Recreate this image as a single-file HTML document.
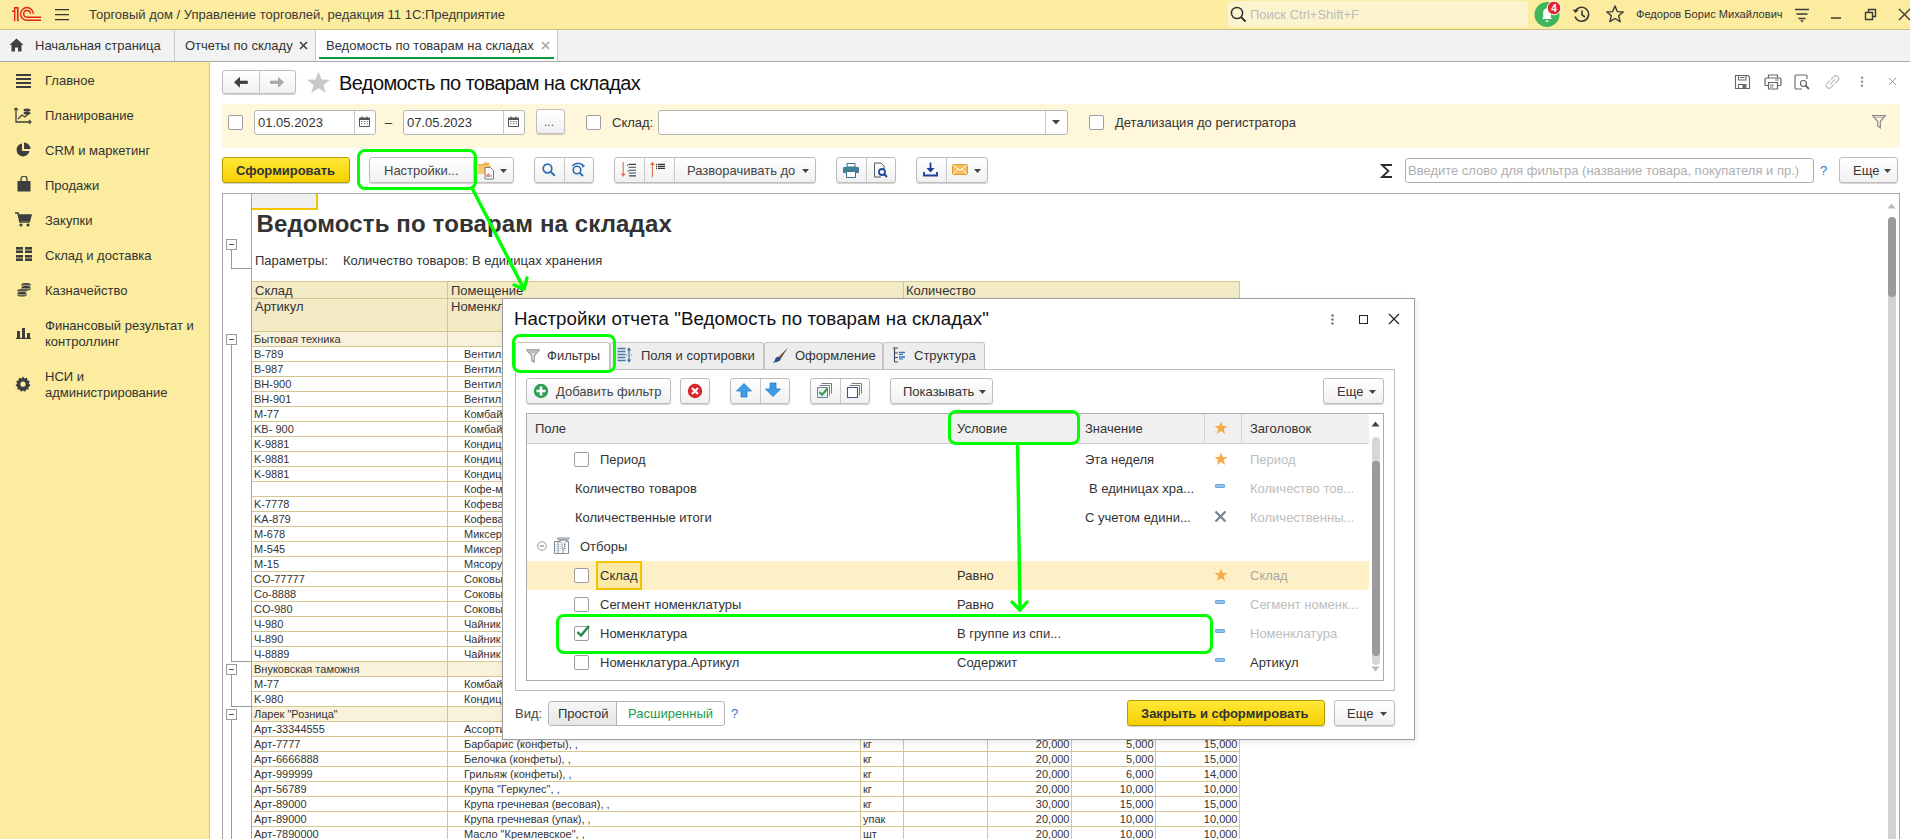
<!DOCTYPE html>
<html><head><meta charset="utf-8">
<style>
*{box-sizing:border-box;margin:0;padding:0}
html,body{width:1910px;height:839px;overflow:hidden;background:#fff;font-family:"Liberation Sans",sans-serif;font-size:13px;color:#333}
.a{position:absolute}
.t{position:absolute;white-space:nowrap;line-height:15px}
#top{left:0;top:0;width:1910px;height:30px;background:#FBEC9F;border-bottom:1px solid #CDBF80}
#tabs{left:0;top:30px;width:1910px;height:32px;background:#F2F2F2;border-bottom:1px solid #A9A9A9}
#side{left:0;top:62px;width:210px;height:777px;background:#FBEC9F;border-right:1px solid #D2C68C}
.btn{position:absolute;border:1px solid #BDBDBD;border-radius:3px;background:linear-gradient(#FFFFFF,#F0F0F0);box-shadow:0 1px 1px rgba(0,0,0,.18)}
.inp{position:absolute;border:1px solid #B5B5B5;border-radius:3px;background:#fff}
.cb{position:absolute;width:15px;height:15px;border:1px solid #9E9E9E;border-radius:2px;background:#fff}
.g{position:absolute;border:3.5px solid #00FF00;border-radius:8px}

#rep{left:222px;top:193px;width:1678px;height:660px;border:1px solid #A6A6A6;background:#fff;overflow:hidden}
.rt{position:absolute;white-space:nowrap;font-size:11px;line-height:15px;color:#333}
.hd{position:absolute;background:#F3EAC6}
.gr{position:absolute;background:#F8F1DB}
.hl{position:absolute;height:1px;background:#D5C68F}
.vl{position:absolute;width:1px;background:#D5C68F}
.mb{position:absolute;width:11px;height:11px;border:1px solid #9a9a9a;background:#fff}
.mb:after{content:"";position:absolute;left:2px;top:4px;width:5px;height:1px;background:#555}
.tl{position:absolute;background:#9a9a9a}

.dt{position:absolute;white-space:nowrap;line-height:15px;color:#333;font-size:13px}
.tab{position:absolute;top:342px;height:27px;border:1px solid #C4C4C4;border-bottom:none;border-radius:3px 3px 0 0;background:#EDEDED}
.bd{position:absolute;width:10px;height:4px;background:#8FC3EC;border:1px solid #6FA6D6;border-radius:1px}
</style></head><body>

<!-- TOP BAR -->
<div id="top" class="a">
  <svg class="a" style="left:0;top:0" width="45" height="30" viewBox="0 0 45 30">
    <path d="M14 7H18.6V21.2H16.9V8.4H15.4V21.2H14V11.9H12V10.5H14Z" fill="#E2231A"/>
    <path d="M33.3 13.9A6.35 6.35 0 1 0 26.95 20.25H41" stroke="#E2231A" stroke-width="1.4" fill="none"/>
    <path d="M30.4 13.85A3.35 3.35 0 1 0 27.05 17.2H41" stroke="#E2231A" stroke-width="1.4" fill="none"/>
  </svg>
  <svg class="a" style="left:55px;top:8px" width="15" height="14" viewBox="0 0 15 14"><path d="M0 1.5H14M0 6.5H14M0 11.5H14" stroke="#333" stroke-width="1.25"/></svg>
  <div class="t" style="left:89px;top:7px;color:#3a3a3a">Торговый дом / Управление торговлей, редакция 11 1С:Предприятие</div>
  <div class="a" style="left:1228px;top:1px;width:300px;height:26px;background:#FCF3CF;border-radius:3px"></div>
  <svg class="a" style="left:1230px;top:6px" width="17" height="17" viewBox="0 0 17 17"><circle cx="7" cy="7" r="5.6" stroke="#333" stroke-width="1.5" fill="none"/><path d="M11 11L15.5 15.5" stroke="#333" stroke-width="2"/></svg>
  <div class="t" style="left:1250px;top:7px;color:#BDBDBD">Поиск Ctrl+Shift+F</div>
  <svg class="a" style="left:1534px;top:1px" width="34" height="27" viewBox="0 0 34 27"><circle cx="13" cy="13.5" r="12.5" fill="#3FB65E"/><path d="M8 18H18L16.8 16.2V11.5Q16.8 8 13 7.2Q9.2 8 9.2 11.5V16.2Z" fill="#fff"/><path d="M11.5 19.5H14.5Q14.5 21.2 13 21.2Q11.5 21.2 11.5 19.5Z" fill="#fff"/><circle cx="20" cy="7" r="6.8" fill="#E2262B" stroke="#fff" stroke-width="1"/><text x="20" y="10.6" font-family="Liberation Sans" font-weight="bold" font-size="10" fill="#fff" text-anchor="middle">4</text></svg>
  <svg class="a" style="left:1572px;top:6px" width="19" height="17" viewBox="0 0 19 17"><path d="M3.2 5.5A7 7 0 1 1 3 10.5" stroke="#3a3a3a" stroke-width="1.6" fill="none"/><path d="M0.5 3.5L3.5 7L6.8 4Z" fill="#3a3a3a"/><path d="M10 4.5V8.8L13 11" stroke="#3a3a3a" stroke-width="1.6" fill="none"/></svg>
  <svg class="a" style="left:1606px;top:5px" width="18" height="18" viewBox="0 0 18 18"><path d="M9 1L11.3 6.6L17.2 7L12.7 10.8L14.1 16.7L9 13.5L3.9 16.7L5.3 10.8L0.8 7L6.7 6.6Z" stroke="#3a3a3a" stroke-width="1.4" fill="none" stroke-linejoin="round"/></svg>
  <div class="t" style="left:1636px;top:7px;font-size:11.1px;color:#333">Федоров Борис Михайлович</div>
  <svg class="a" style="left:1794px;top:8px" width="16" height="15" viewBox="0 0 16 15"><path d="M1 1.5H15M2.5 6H13.5M4.5 10.5H11.5" stroke="#3a3a3a" stroke-width="1.3"/><path d="M6.2 12.3H9.8L8 14.5Z" fill="#3a3a3a"/></svg>
  <svg class="a" style="left:1830px;top:16px" width="12" height="4" viewBox="0 0 12 4"><path d="M1 2H11" stroke="#3a3a3a" stroke-width="1.5"/></svg>
  <svg class="a" style="left:1864px;top:8px" width="13" height="13" viewBox="0 0 13 13"><path d="M1.5 4.5H8.5V11.5H1.5Z" stroke="#3a3a3a" stroke-width="1.4" fill="none"/><path d="M4.5 4.5V1.5H11.5V8.5H8.5" stroke="#3a3a3a" stroke-width="1.4" fill="none"/></svg>
  <svg class="a" style="left:1898px;top:8px" width="13" height="13" viewBox="0 0 13 13"><path d="M1 1L12 12M12 1L1 12" stroke="#3a3a3a" stroke-width="1.4"/></svg>
</div>

<!-- TABS -->
<div id="tabs" class="a">
  <div class="a" style="left:174px;top:0;width:1px;height:31px;background:#C8C8C8"></div>
  <div class="a" style="left:315px;top:0;width:243px;height:31px;background:#fff;border-left:1px solid #C8C8C8;border-right:1px solid #C8C8C8"></div>
  <div class="a" style="left:319px;top:27px;width:235px;height:2px;background:#119A3B"></div>
  <svg class="a" style="left:9px;top:8px" width="15" height="14" viewBox="0 0 15 14"><path d="M7.5 0.5 L0.5 7 H2.5 V13.5 H6 V9.5 H9 V13.5 H12.5 V7 H14.5 Z" fill="#404040"/></svg>
  <div class="t" style="left:35px;top:8px;color:#333">Начальная страница</div>
  <div class="t" style="left:185px;top:8px;color:#333">Отчеты по складу</div>
  <svg class="a" style="left:299px;top:11px" width="9" height="9" viewBox="0 0 9 9"><path d="M1 1L8 8M8 1L1 8" stroke="#444" stroke-width="1.6"/></svg>
  <div class="t" style="left:326px;top:8px;color:#333">Ведомость по товарам на складах</div>
  <svg class="a" style="left:541px;top:11px" width="9" height="9" viewBox="0 0 9 9"><path d="M1 1L8 8M8 1L1 8" stroke="#A5A5A5" stroke-width="1.6"/></svg>
</div>

<!-- SIDEBAR -->
<div id="side" class="a">
  <svg class="a" style="left:16px;top:12px" width="16" height="14" viewBox="0 0 16 14"><path d="M0 1H15M0 5H15M0 9H15M0 13H15" stroke="#3d3d3d" stroke-width="1.8"/></svg>
  <div class="t" style="left:45px;top:11px">Главное</div>
  <svg class="a" style="left:14px;top:45px" width="18" height="17" viewBox="0 0 18 17"><path d="M2 1V15H17" stroke="#3d3d3d" stroke-width="1.3" fill="none"/><path d="M0 3L2 1L4 3M15 13L17 15L15 17" stroke="#3d3d3d" stroke-width="1.1" fill="none"/><path d="M4 12L8 8L11 10L15 6" stroke="#3d3d3d" stroke-width="1.3" fill="none"/><ellipse cx="13" cy="3" rx="3.5" ry="1.6" fill="#3d3d3d"/><ellipse cx="13" cy="6" rx="3.5" ry="1.6" fill="#3d3d3d"/></svg>
  <div class="t" style="left:45px;top:46px">Планирование</div>
  <svg class="a" style="left:15px;top:80px" width="16" height="16" viewBox="0 0 16 16"><path d="M7 1.5A6.5 6.5 0 1 0 14.5 9H7Z" fill="#3d3d3d"/><path d="M9 0.5V7H15.5A6.5 6.5 0 0 0 9 0.5Z" fill="#3d3d3d"/></svg>
  <div class="t" style="left:45px;top:81px">CRM и маркетинг</div>
  <svg class="a" style="left:17px;top:114px" width="14" height="16" viewBox="0 0 14 16"><path d="M4 5V3A3 3 0 0 1 10 3V5" stroke="#3d3d3d" stroke-width="1.3" fill="none"/><path d="M0.5 5H13.5V15.5H0.5Z" fill="#3d3d3d"/></svg>
  <div class="t" style="left:45px;top:116px">Продажи</div>
  <svg class="a" style="left:15px;top:150px" width="17" height="15" viewBox="0 0 17 15"><path d="M0 1H3L5 10H14L16 3H4" stroke="#3d3d3d" stroke-width="1.6" fill="none"/><path d="M4 3H16L14.5 9H5Z" fill="#3d3d3d"/><circle cx="6" cy="13" r="1.6" fill="#3d3d3d"/><circle cx="13" cy="13" r="1.6" fill="#3d3d3d"/></svg>
  <div class="t" style="left:45px;top:151px">Закупки</div>
  <svg class="a" style="left:16px;top:185px" width="16" height="14" viewBox="0 0 16 14"><path d="M0 0H7V6H0ZM9 0H16V6H9ZM0 8H7V14H0ZM9 8H16V14H9Z" fill="#3d3d3d"/><path d="M0 3H16M0 11H16" stroke="#FBEC9F" stroke-width="0.8"/></svg>
  <div class="t" style="left:45px;top:186px">Склад и доставка</div>
  <svg class="a" style="left:16px;top:220px" width="16" height="15" viewBox="0 0 16 15"><ellipse cx="10" cy="3" rx="5" ry="2" fill="#3d3d3d"/><ellipse cx="10" cy="6.5" rx="5" ry="2" fill="#3d3d3d"/><ellipse cx="6" cy="9" rx="5" ry="2" fill="#3d3d3d"/><ellipse cx="6" cy="12.5" rx="5" ry="2" fill="#3d3d3d"/><path d="M1 9.3H11M1 12.8H11M5 3.3H15M5 6.8H15" stroke="#FBEC9F" stroke-width="0.7"/></svg>
  <div class="t" style="left:45px;top:221px">Казначейство</div>
  <svg class="a" style="left:16px;top:264px" width="15" height="13" viewBox="0 0 15 13"><path d="M0 12.5H15" stroke="#3d3d3d" stroke-width="1.4"/><path d="M1 5H4V12H1ZM6 2H9V12H6ZM11 7H14V12H11Z" fill="#3d3d3d"/></svg>
  <div class="t" style="left:45px;top:256px">Финансовый результат и</div>
  <div class="t" style="left:45px;top:272px">контроллинг</div>
  <svg class="a" style="left:15px;top:314px" width="16" height="16" viewBox="0 0 16 16"><path d="M8 0.5L9.5 2.5L12 1.8L12.4 4.3L14.8 5.2L13.8 7.5L15.5 9.5L13.4 10.9L13.6 13.4L11.1 13.5L10.1 15.8L8 14.4L5.9 15.8L4.9 13.5L2.4 13.4L2.6 10.9L0.5 9.5L2.2 7.5L1.2 5.2L3.6 4.3L4 1.8L6.5 2.5Z" fill="#3d3d3d"/><circle cx="8" cy="8.2" r="2.6" fill="#FBEC9F"/></svg>
  <div class="t" style="left:45px;top:307px">НСИ и</div>
  <div class="t" style="left:45px;top:323px">администрирование</div>
</div>

<!-- FORM HEADER -->
<div class="btn" style="left:222px;top:70px;width:74px;height:24px"></div>
<div class="a" style="left:259px;top:71px;width:1px;height:22px;background:#C8C8C8"></div>
<svg class="a" style="left:233px;top:76px" width="16" height="13" viewBox="0 0 16 13"><path d="M1 6.3L7 0.8V11.8Z" fill="#404040"/><path d="M6.5 4.7H14.8V7.9H6.5Z" fill="#404040"/></svg>
<svg class="a" style="left:269px;top:76px" width="16" height="13" viewBox="0 0 16 13"><path d="M15 6.3L9 0.8V11.8Z" fill="#A8A8A8"/><path d="M1 4.7H9.5V7.9H1Z" fill="#A8A8A8"/></svg>
<svg class="a" style="left:306px;top:71px" width="25" height="23" viewBox="0 0 25 23"><path d="M12.5 0.5L15.6 8.4L24 8.7L17.4 13.9L19.7 22L12.5 17.3L5.3 22L7.6 13.9L1 8.7L9.4 8.4Z" fill="#C9C9C9"/></svg>
<div class="t" style="left:339px;top:71.5px;font-size:20px;line-height:23px;letter-spacing:-0.6px;color:#111">Ведомость по товарам на складах</div>
<!-- right icons -->
<svg class="a" style="left:1734px;top:74px" width="17" height="16" viewBox="0 0 17 16"><path d="M1.5 1.5H14L15.5 3V14.5H1.5Z" stroke="#666" stroke-width="1.1" fill="none"/><path d="M4.5 1.5V6H12V1.5M6 3.5H10.5" stroke="#666" stroke-width="1.1" fill="none"/><path d="M4.5 14.5V10.5H12V14.5" stroke="#666" stroke-width="1.1" fill="none"/><path d="M8.5 11H11.5V14H8.5Z" fill="#666"/></svg>
<svg class="a" style="left:1764px;top:74px" width="18" height="16" viewBox="0 0 18 16"><path d="M4.5 4V1H13.5V4" stroke="#666" stroke-width="1.2" fill="none"/><path d="M4 11.5H2Q1 11.5 1 10.5V5Q1 4 2 4H16Q17 4 17 5V10.5Q17 11.5 16 11.5H14" stroke="#666" stroke-width="1.2" fill="none"/><path d="M4.5 8.5H13.5V15H4.5Z" stroke="#666" stroke-width="1.2" fill="none"/><path d="M6 11H10M6 13H9M11 6H15" stroke="#666" stroke-width="0.9"/></svg>
<svg class="a" style="left:1794px;top:74px" width="17" height="16" viewBox="0 0 17 16"><path d="M8 15H2Q1 15 1 14V2Q1 1 2 1H12Q13 1 13 2V5" stroke="#666" stroke-width="1.1" fill="none"/><circle cx="9.5" cy="9.5" r="3" stroke="#666" stroke-width="1.1" fill="none"/><path d="M11.7 11.7L15 15" stroke="#666" stroke-width="1.8"/></svg>
<svg class="a" style="left:1824px;top:74px" width="17" height="16" viewBox="0 0 17 16"><path d="M7 5.5L10 2.5Q12 0.8 14 2.5Q15.8 4.5 14 6.5L11 9.5M10 10.5L7 13.5Q5 15.2 3 13.5Q1.2 11.5 3 9.5L6 6.5M6 10.5L11 5.5" stroke="#BDBDBD" stroke-width="1.1" fill="none"/></svg>
<svg class="a" style="left:1859px;top:76px" width="6" height="12" viewBox="0 0 6 12"><circle cx="3" cy="1.8" r="1.3" fill="#9a9a9a"/><circle cx="3" cy="5.8" r="1.3" fill="#9a9a9a"/><circle cx="3" cy="9.8" r="1.3" fill="#9a9a9a"/></svg>
<svg class="a" style="left:1888px;top:77px" width="9" height="9" viewBox="0 0 9 9"><path d="M1 1L8 8M8 1L1 8" stroke="#999" stroke-width="1"/></svg>

<!-- FILTER PANEL -->
<div class="a" style="left:222px;top:104px;width:1678px;height:44px;background:#FEF7DB"></div>
<div class="cb" style="left:228px;top:115px"></div>
<div class="inp" style="left:254px;top:110px;width:122px;height:25px"></div>
<div class="a" style="left:354px;top:111px;width:1px;height:23px;background:#C8C8C8"></div>
<div class="t" style="left:258px;top:115px;color:#333">01.05.2023</div>
<svg class="a" style="left:359px;top:116px" width="11" height="11" viewBox="0 0 11 11"><path d="M0.5 2H10.5V10.5H0.5Z" stroke="#555" stroke-width="1" fill="#fff"/><path d="M0.5 2H10.5V4H0.5Z" fill="#555"/><path d="M3 0.5V2.5M8 0.5V2.5" stroke="#555" stroke-width="1.2"/><path d="M2 5.5H3.5M4.8 5.5H6.3M7.6 5.5H9M2 7.8H3.5M4.8 7.8H6.3M7.6 7.8H9" stroke="#777" stroke-width="1.1"/></svg>
<div class="t" style="left:385px;top:115px;color:#333">–</div>
<div class="inp" style="left:403px;top:110px;width:122px;height:25px"></div>
<div class="a" style="left:503px;top:111px;width:1px;height:23px;background:#C8C8C8"></div>
<div class="t" style="left:407px;top:115px;color:#333">07.05.2023</div>
<svg class="a" style="left:508px;top:116px" width="11" height="11" viewBox="0 0 11 11"><path d="M0.5 2H10.5V10.5H0.5Z" stroke="#555" stroke-width="1" fill="#fff"/><path d="M0.5 2H10.5V4H0.5Z" fill="#555"/><path d="M3 0.5V2.5M8 0.5V2.5" stroke="#555" stroke-width="1.2"/><path d="M2 5.5H3.5M4.8 5.5H6.3M7.6 5.5H9M2 7.8H3.5M4.8 7.8H6.3M7.6 7.8H9" stroke="#777" stroke-width="1.1"/></svg>
<div class="btn" style="left:536px;top:109px;width:29px;height:25px"></div>
<div class="t" style="left:544px;top:115px;color:#555;font-size:12px">...</div>
<div class="cb" style="left:586px;top:115px"></div>
<div class="t" style="left:612px;top:115px;color:#333">Склад:</div>
<div class="inp" style="left:658px;top:110px;width:410px;height:25px"></div>
<div class="a" style="left:1045px;top:111px;width:1px;height:23px;background:#C8C8C8"></div>
<svg class="a" style="left:1052px;top:120px" width="8" height="5" viewBox="0 0 8 5"><path d="M0 0H8L4 4.5Z" fill="#444"/></svg>
<div class="cb" style="left:1089px;top:115px"></div>
<div class="t" style="left:1115px;top:115px;color:#333">Детализация до регистратора</div>
<svg class="a" style="left:1872px;top:115px" width="14" height="14" viewBox="0 0 14 14"><path d="M0.7 0.7H13.3L8.3 6.5V12.8L5.7 11V6.5Z" stroke="#8a8a8a" stroke-width="1.2" fill="none"/><path d="M3 2.5H11" stroke="#bbb" stroke-width="1"/></svg>

<!-- TOOLBAR -->
<div class="a" style="left:222px;top:157px;width:128px;height:26px;border:1px solid #B59C00;border-radius:3px;background:linear-gradient(#FFE838,#F6D000);box-shadow:0 1px 1px rgba(0,0,0,.2)"></div>
<div class="t" style="left:236px;top:163px;font-weight:bold;color:#333">Сформировать</div>
<div class="btn" style="left:369px;top:157px;width:145px;height:26px"></div>
<div class="a" style="left:473px;top:158px;width:1px;height:24px;background:#C8C8C8"></div>
<div class="t" style="left:384px;top:163px;color:#444">Настройки...</div>
<svg class="a" style="left:477px;top:160px" width="18" height="20" viewBox="0 0 18 20"><path d="M1 4H6L7.5 2.5H12V7H1Z" fill="#E8B24C"/><path d="M1 5.5H14V14H1Z" fill="#F6C86A"/><path d="M8 7.5H13.5L16.5 10.5V19H8Z" fill="#fff" stroke="#6d7d8d" stroke-width="1"/><path d="M10 17V14M12 17V13M14 17V15" stroke="#e14a3a" stroke-width="1"/><path d="M11 17V15" stroke="#31a24a" stroke-width="1"/></svg>
<svg class="a" style="left:500px;top:169px" width="8" height="5" viewBox="0 0 8 5"><path d="M0 0H7L3.5 4Z" fill="#444"/></svg>

<div class="btn" style="left:534px;top:157px;width:60px;height:26px"></div>
<div class="a" style="left:564px;top:158px;width:1px;height:24px;background:#C8C8C8"></div>
<svg class="a" style="left:542px;top:163px" width="14" height="14" viewBox="0 0 14 14"><circle cx="5.5" cy="5.5" r="4.3" stroke="#2C6BB0" stroke-width="1.7" fill="none"/><path d="M8.6 8.6L12.8 12.8" stroke="#2C6BB0" stroke-width="2"/></svg>
<svg class="a" style="left:571px;top:162px" width="16" height="16" viewBox="0 0 16 16"><circle cx="6" cy="8" r="3.8" stroke="#2C6BB0" stroke-width="1.6" fill="none"/><path d="M8.8 10.8L12 14" stroke="#2C6BB0" stroke-width="1.9"/><path d="M1 4Q6 -1 12 3" stroke="#2C6BB0" stroke-width="1.4" fill="none"/><path d="M10 1.5L14 3.5L11.5 6Z" fill="#2C6BB0"/></svg>

<div class="btn" style="left:614px;top:157px;width:202px;height:26px"></div>
<div class="a" style="left:644px;top:158px;width:1px;height:24px;background:#C8C8C8"></div>
<div class="a" style="left:674px;top:158px;width:1px;height:24px;background:#C8C8C8"></div>
<svg class="a" style="left:619px;top:161px" width="18" height="17" viewBox="0 0 18 17"><path d="M4.2 1V14" stroke="#E06F4A" stroke-width="1.1"/><path d="M1.8 12.5L4.2 16L6.6 12.5Z" fill="#E06F4A"/><path d="M9.5 3.4H17M8 4.4H9M9.5 6.3H17M9.5 9.2H17M8.5 10.2H9.5M10 12H17M10 14.9H17" stroke="#3a4550" stroke-width="1.1"/></svg>
<svg class="a" style="left:649px;top:161px" width="18" height="17" viewBox="0 0 18 17"><path d="M3.4 2.5V16" stroke="#E06F4A" stroke-width="1.1"/><path d="M1 4L3.4 0.6L5.8 4Z" fill="#E06F4A"/><path d="M7 3.4H8M9 3.4H16M7 5.4H8M9 5.4H16M7 7.4H8M9 7.4H16" stroke="#333" stroke-width="1.2"/></svg>
<div class="t" style="left:687px;top:163px;color:#444">Разворачивать до</div>
<svg class="a" style="left:802px;top:169px" width="8" height="5" viewBox="0 0 8 5"><path d="M0 0H7L3.5 4Z" fill="#444"/></svg>

<div class="btn" style="left:836px;top:157px;width:60px;height:26px"></div>
<div class="a" style="left:866px;top:158px;width:1px;height:24px;background:#C8C8C8"></div>
<svg class="a" style="left:843px;top:163px" width="16" height="15" viewBox="0 0 16 15"><path d="M4 0.5H12V4H4Z" fill="#fff" stroke="#3b6e8a" stroke-width="1"/><path d="M1 4H15Q16 4 16 5V10H13V8H3V10H0V5Q0 4 1 4Z" fill="#3F7F98"/><path d="M3.5 8.5H12.5V14.5H3.5Z" fill="#fff" stroke="#3b6e8a" stroke-width="1"/></svg>
<svg class="a" style="left:873px;top:162px" width="16" height="16" viewBox="0 0 16 16"><path d="M8 15H1.5V1H8L11 4V7" stroke="#4a5a6a" stroke-width="1" fill="none"/><circle cx="9" cy="10" r="3" stroke="#1B4F94" stroke-width="1.8" fill="none"/><path d="M11 12L14 15" stroke="#1B4F94" stroke-width="2"/></svg>

<div class="btn" style="left:916px;top:157px;width:72px;height:26px"></div>
<div class="a" style="left:946px;top:158px;width:1px;height:24px;background:#C8C8C8"></div>
<svg class="a" style="left:923px;top:162px" width="15" height="15" viewBox="0 0 15 15"><path d="M7.5 0.5V9" stroke="#1F3E94" stroke-width="1.8"/><path d="M3.5 6L7.5 10.5L11.5 6Z" fill="#1F3E94"/><path d="M1 10V13.5H14V10" stroke="#1F3E94" stroke-width="1.8" fill="none"/></svg>
<svg class="a" style="left:952px;top:164px" width="16" height="11" viewBox="0 0 16 11"><path d="M0.5 0.5H15.5V10.5H0.5Z" fill="#F5BE5C" stroke="#E49B2A" stroke-width="1"/><path d="M0.5 0.5L8 6.5L15.5 0.5M0.5 10.5L6 5.5M15.5 10.5L10 5.5" stroke="#fff" stroke-width="1" fill="none"/></svg>
<svg class="a" style="left:974px;top:169px" width="8" height="5" viewBox="0 0 8 5"><path d="M0 0H7L3.5 4Z" fill="#444"/></svg>

<svg class="a" style="left:1380px;top:163px" width="14" height="16" viewBox="0 0 14 16"><path d="M12 2H2L8.4 8L2 14H12" stroke="#2d2d2d" stroke-width="1.8" fill="none" stroke-linejoin="miter" stroke-miterlimit="10"/></svg>
<div class="inp" style="left:1405px;top:158px;width:409px;height:25px;border-color:#B0B0B0"></div>
<div class="t" style="left:1408px;top:163px;color:#AFAFAF">Введите слово для фильтра (название товара, покупателя и пр.)</div>
<div class="t" style="left:1820px;top:163px;color:#2F76C0">?</div>
<div class="btn" style="left:1839px;top:157px;width:59px;height:26px"></div>
<div class="t" style="left:1853px;top:163px;color:#333">Еще</div>
<svg class="a" style="left:1884px;top:169px" width="8" height="5" viewBox="0 0 8 5"><path d="M0 0H7L3.5 4Z" fill="#444"/></svg>

<!-- REPORT -->
<div id="rep" class="a">
<div class="a" style="left:29px;top:0;width:66px;height:16px;background:#F0F0F0;border-right:2px solid #F2C500;border-bottom:2px solid #F2C500"></div>

<div class="t" style="left:33.5px;top:15.5px;font-size:24px;line-height:28px;font-weight:bold;letter-spacing:0.13px;color:#333">Ведомость по товарам на складах</div>
<div class="t" style="left:32px;top:59px;color:#333">Параметры:</div>
<div class="t" style="left:120px;top:59px;color:#333">Количество товаров: В единицах хранения</div>
<div class="mb" style="left:3px;top:45px"></div>
<div class="tl" style="left:8px;top:56px;width:1px;height:18px"></div>
<div class="tl" style="left:8px;top:74px;width:20px;height:1px"></div>
<div class="hd" style="left:28px;top:87px;width:988px;height:50px"></div>
<div class="hl" style="left:28px;top:87px;width:989px"></div>
<div class="hl" style="left:28px;top:104px;width:989px"></div>
<div class="vl" style="left:224px;top:87px;height:17px"></div>
<div class="vl" style="left:680px;top:87px;height:17px"></div>
<div class="vl" style="left:1016px;top:87px;height:17px"></div>
<div class="vl" style="left:224px;top:104px;height:33px"></div>
<div class="vl" style="left:637px;top:104px;height:33px"></div>
<div class="vl" style="left:680px;top:104px;height:33px"></div>
<div class="vl" style="left:764px;top:104px;height:33px"></div>
<div class="vl" style="left:848px;top:104px;height:33px"></div>
<div class="vl" style="left:932px;top:104px;height:33px"></div>
<div class="vl" style="left:1016px;top:104px;height:33px"></div>
<div class="t" style="left:32px;top:89px">Склад</div>
<div class="t" style="left:228px;top:89px">Помещение</div>
<div class="t" style="left:683px;top:89px">Количество</div>
<div class="t" style="left:32px;top:105px">Артикул</div>
<div class="t" style="left:228px;top:105px">Номенклатура</div>
<div class="gr" style="left:28px;top:137px;width:988px;height:15px"></div>
<div class="hl" style="left:28px;top:137px;width:989px"></div>
<div class="vl" style="left:224px;top:137px;height:15px"></div>
<div class="vl" style="left:1016px;top:137px;height:15px"></div>
<div class="rt" style="left:31px;top:138px">Бытовая техника</div>
<div class="hl" style="left:28px;top:152px;width:989px"></div>
<div class="vl" style="left:224px;top:152px;height:15px"></div>
<div class="vl" style="left:637px;top:152px;height:15px"></div>
<div class="vl" style="left:680px;top:152px;height:15px"></div>
<div class="vl" style="left:764px;top:152px;height:15px"></div>
<div class="vl" style="left:848px;top:152px;height:15px"></div>
<div class="vl" style="left:932px;top:152px;height:15px"></div>
<div class="vl" style="left:1016px;top:152px;height:15px"></div>
<div class="rt" style="left:31px;top:153px">B-789</div>
<div class="rt" style="left:241px;top:153px">Вентилятор</div>
<div class="hl" style="left:28px;top:167px;width:989px"></div>
<div class="vl" style="left:224px;top:167px;height:15px"></div>
<div class="vl" style="left:637px;top:167px;height:15px"></div>
<div class="vl" style="left:680px;top:167px;height:15px"></div>
<div class="vl" style="left:764px;top:167px;height:15px"></div>
<div class="vl" style="left:848px;top:167px;height:15px"></div>
<div class="vl" style="left:932px;top:167px;height:15px"></div>
<div class="vl" style="left:1016px;top:167px;height:15px"></div>
<div class="rt" style="left:31px;top:168px">B-987</div>
<div class="rt" style="left:241px;top:168px">Вентилятор</div>
<div class="hl" style="left:28px;top:182px;width:989px"></div>
<div class="vl" style="left:224px;top:182px;height:15px"></div>
<div class="vl" style="left:637px;top:182px;height:15px"></div>
<div class="vl" style="left:680px;top:182px;height:15px"></div>
<div class="vl" style="left:764px;top:182px;height:15px"></div>
<div class="vl" style="left:848px;top:182px;height:15px"></div>
<div class="vl" style="left:932px;top:182px;height:15px"></div>
<div class="vl" style="left:1016px;top:182px;height:15px"></div>
<div class="rt" style="left:31px;top:183px">BH-900</div>
<div class="rt" style="left:241px;top:183px">Вентилятор</div>
<div class="hl" style="left:28px;top:197px;width:989px"></div>
<div class="vl" style="left:224px;top:197px;height:15px"></div>
<div class="vl" style="left:637px;top:197px;height:15px"></div>
<div class="vl" style="left:680px;top:197px;height:15px"></div>
<div class="vl" style="left:764px;top:197px;height:15px"></div>
<div class="vl" style="left:848px;top:197px;height:15px"></div>
<div class="vl" style="left:932px;top:197px;height:15px"></div>
<div class="vl" style="left:1016px;top:197px;height:15px"></div>
<div class="rt" style="left:31px;top:198px">BH-901</div>
<div class="rt" style="left:241px;top:198px">Вентилятор</div>
<div class="hl" style="left:28px;top:212px;width:989px"></div>
<div class="vl" style="left:224px;top:212px;height:15px"></div>
<div class="vl" style="left:637px;top:212px;height:15px"></div>
<div class="vl" style="left:680px;top:212px;height:15px"></div>
<div class="vl" style="left:764px;top:212px;height:15px"></div>
<div class="vl" style="left:848px;top:212px;height:15px"></div>
<div class="vl" style="left:932px;top:212px;height:15px"></div>
<div class="vl" style="left:1016px;top:212px;height:15px"></div>
<div class="rt" style="left:31px;top:213px">M-77</div>
<div class="rt" style="left:241px;top:213px">Комбайн</div>
<div class="hl" style="left:28px;top:227px;width:989px"></div>
<div class="vl" style="left:224px;top:227px;height:15px"></div>
<div class="vl" style="left:637px;top:227px;height:15px"></div>
<div class="vl" style="left:680px;top:227px;height:15px"></div>
<div class="vl" style="left:764px;top:227px;height:15px"></div>
<div class="vl" style="left:848px;top:227px;height:15px"></div>
<div class="vl" style="left:932px;top:227px;height:15px"></div>
<div class="vl" style="left:1016px;top:227px;height:15px"></div>
<div class="rt" style="left:31px;top:228px">KB- 900</div>
<div class="rt" style="left:241px;top:228px">Комбайн</div>
<div class="hl" style="left:28px;top:242px;width:989px"></div>
<div class="vl" style="left:224px;top:242px;height:15px"></div>
<div class="vl" style="left:637px;top:242px;height:15px"></div>
<div class="vl" style="left:680px;top:242px;height:15px"></div>
<div class="vl" style="left:764px;top:242px;height:15px"></div>
<div class="vl" style="left:848px;top:242px;height:15px"></div>
<div class="vl" style="left:932px;top:242px;height:15px"></div>
<div class="vl" style="left:1016px;top:242px;height:15px"></div>
<div class="rt" style="left:31px;top:243px">K-9881</div>
<div class="rt" style="left:241px;top:243px">Кондиционер</div>
<div class="hl" style="left:28px;top:257px;width:989px"></div>
<div class="vl" style="left:224px;top:257px;height:15px"></div>
<div class="vl" style="left:637px;top:257px;height:15px"></div>
<div class="vl" style="left:680px;top:257px;height:15px"></div>
<div class="vl" style="left:764px;top:257px;height:15px"></div>
<div class="vl" style="left:848px;top:257px;height:15px"></div>
<div class="vl" style="left:932px;top:257px;height:15px"></div>
<div class="vl" style="left:1016px;top:257px;height:15px"></div>
<div class="rt" style="left:31px;top:258px">K-9881</div>
<div class="rt" style="left:241px;top:258px">Кондиционер</div>
<div class="hl" style="left:28px;top:272px;width:989px"></div>
<div class="vl" style="left:224px;top:272px;height:15px"></div>
<div class="vl" style="left:637px;top:272px;height:15px"></div>
<div class="vl" style="left:680px;top:272px;height:15px"></div>
<div class="vl" style="left:764px;top:272px;height:15px"></div>
<div class="vl" style="left:848px;top:272px;height:15px"></div>
<div class="vl" style="left:932px;top:272px;height:15px"></div>
<div class="vl" style="left:1016px;top:272px;height:15px"></div>
<div class="rt" style="left:31px;top:273px">K-9881</div>
<div class="rt" style="left:241px;top:273px">Кондиционер</div>
<div class="hl" style="left:28px;top:287px;width:989px"></div>
<div class="vl" style="left:224px;top:287px;height:15px"></div>
<div class="vl" style="left:637px;top:287px;height:15px"></div>
<div class="vl" style="left:680px;top:287px;height:15px"></div>
<div class="vl" style="left:764px;top:287px;height:15px"></div>
<div class="vl" style="left:848px;top:287px;height:15px"></div>
<div class="vl" style="left:932px;top:287px;height:15px"></div>
<div class="vl" style="left:1016px;top:287px;height:15px"></div>
<div class="rt" style="left:31px;top:288px"></div>
<div class="rt" style="left:241px;top:288px">Кофе-машина</div>
<div class="hl" style="left:28px;top:302px;width:989px"></div>
<div class="vl" style="left:224px;top:302px;height:15px"></div>
<div class="vl" style="left:637px;top:302px;height:15px"></div>
<div class="vl" style="left:680px;top:302px;height:15px"></div>
<div class="vl" style="left:764px;top:302px;height:15px"></div>
<div class="vl" style="left:848px;top:302px;height:15px"></div>
<div class="vl" style="left:932px;top:302px;height:15px"></div>
<div class="vl" style="left:1016px;top:302px;height:15px"></div>
<div class="rt" style="left:31px;top:303px">K-7778</div>
<div class="rt" style="left:241px;top:303px">Кофеварка</div>
<div class="hl" style="left:28px;top:317px;width:989px"></div>
<div class="vl" style="left:224px;top:317px;height:15px"></div>
<div class="vl" style="left:637px;top:317px;height:15px"></div>
<div class="vl" style="left:680px;top:317px;height:15px"></div>
<div class="vl" style="left:764px;top:317px;height:15px"></div>
<div class="vl" style="left:848px;top:317px;height:15px"></div>
<div class="vl" style="left:932px;top:317px;height:15px"></div>
<div class="vl" style="left:1016px;top:317px;height:15px"></div>
<div class="rt" style="left:31px;top:318px">KA-879</div>
<div class="rt" style="left:241px;top:318px">Кофеварка</div>
<div class="hl" style="left:28px;top:332px;width:989px"></div>
<div class="vl" style="left:224px;top:332px;height:15px"></div>
<div class="vl" style="left:637px;top:332px;height:15px"></div>
<div class="vl" style="left:680px;top:332px;height:15px"></div>
<div class="vl" style="left:764px;top:332px;height:15px"></div>
<div class="vl" style="left:848px;top:332px;height:15px"></div>
<div class="vl" style="left:932px;top:332px;height:15px"></div>
<div class="vl" style="left:1016px;top:332px;height:15px"></div>
<div class="rt" style="left:31px;top:333px">M-678</div>
<div class="rt" style="left:241px;top:333px">Миксер</div>
<div class="hl" style="left:28px;top:347px;width:989px"></div>
<div class="vl" style="left:224px;top:347px;height:15px"></div>
<div class="vl" style="left:637px;top:347px;height:15px"></div>
<div class="vl" style="left:680px;top:347px;height:15px"></div>
<div class="vl" style="left:764px;top:347px;height:15px"></div>
<div class="vl" style="left:848px;top:347px;height:15px"></div>
<div class="vl" style="left:932px;top:347px;height:15px"></div>
<div class="vl" style="left:1016px;top:347px;height:15px"></div>
<div class="rt" style="left:31px;top:348px">M-545</div>
<div class="rt" style="left:241px;top:348px">Миксер</div>
<div class="hl" style="left:28px;top:362px;width:989px"></div>
<div class="vl" style="left:224px;top:362px;height:15px"></div>
<div class="vl" style="left:637px;top:362px;height:15px"></div>
<div class="vl" style="left:680px;top:362px;height:15px"></div>
<div class="vl" style="left:764px;top:362px;height:15px"></div>
<div class="vl" style="left:848px;top:362px;height:15px"></div>
<div class="vl" style="left:932px;top:362px;height:15px"></div>
<div class="vl" style="left:1016px;top:362px;height:15px"></div>
<div class="rt" style="left:31px;top:363px">M-15</div>
<div class="rt" style="left:241px;top:363px">Мясорубка</div>
<div class="hl" style="left:28px;top:377px;width:989px"></div>
<div class="vl" style="left:224px;top:377px;height:15px"></div>
<div class="vl" style="left:637px;top:377px;height:15px"></div>
<div class="vl" style="left:680px;top:377px;height:15px"></div>
<div class="vl" style="left:764px;top:377px;height:15px"></div>
<div class="vl" style="left:848px;top:377px;height:15px"></div>
<div class="vl" style="left:932px;top:377px;height:15px"></div>
<div class="vl" style="left:1016px;top:377px;height:15px"></div>
<div class="rt" style="left:31px;top:378px">CO-77777</div>
<div class="rt" style="left:241px;top:378px">Соковыжималка</div>
<div class="hl" style="left:28px;top:392px;width:989px"></div>
<div class="vl" style="left:224px;top:392px;height:15px"></div>
<div class="vl" style="left:637px;top:392px;height:15px"></div>
<div class="vl" style="left:680px;top:392px;height:15px"></div>
<div class="vl" style="left:764px;top:392px;height:15px"></div>
<div class="vl" style="left:848px;top:392px;height:15px"></div>
<div class="vl" style="left:932px;top:392px;height:15px"></div>
<div class="vl" style="left:1016px;top:392px;height:15px"></div>
<div class="rt" style="left:31px;top:393px">Co-8888</div>
<div class="rt" style="left:241px;top:393px">Соковыжималка</div>
<div class="hl" style="left:28px;top:407px;width:989px"></div>
<div class="vl" style="left:224px;top:407px;height:15px"></div>
<div class="vl" style="left:637px;top:407px;height:15px"></div>
<div class="vl" style="left:680px;top:407px;height:15px"></div>
<div class="vl" style="left:764px;top:407px;height:15px"></div>
<div class="vl" style="left:848px;top:407px;height:15px"></div>
<div class="vl" style="left:932px;top:407px;height:15px"></div>
<div class="vl" style="left:1016px;top:407px;height:15px"></div>
<div class="rt" style="left:31px;top:408px">CO-980</div>
<div class="rt" style="left:241px;top:408px">Соковыжималка</div>
<div class="hl" style="left:28px;top:422px;width:989px"></div>
<div class="vl" style="left:224px;top:422px;height:15px"></div>
<div class="vl" style="left:637px;top:422px;height:15px"></div>
<div class="vl" style="left:680px;top:422px;height:15px"></div>
<div class="vl" style="left:764px;top:422px;height:15px"></div>
<div class="vl" style="left:848px;top:422px;height:15px"></div>
<div class="vl" style="left:932px;top:422px;height:15px"></div>
<div class="vl" style="left:1016px;top:422px;height:15px"></div>
<div class="rt" style="left:31px;top:423px">Ч-980</div>
<div class="rt" style="left:241px;top:423px">Чайник</div>
<div class="hl" style="left:28px;top:437px;width:989px"></div>
<div class="vl" style="left:224px;top:437px;height:15px"></div>
<div class="vl" style="left:637px;top:437px;height:15px"></div>
<div class="vl" style="left:680px;top:437px;height:15px"></div>
<div class="vl" style="left:764px;top:437px;height:15px"></div>
<div class="vl" style="left:848px;top:437px;height:15px"></div>
<div class="vl" style="left:932px;top:437px;height:15px"></div>
<div class="vl" style="left:1016px;top:437px;height:15px"></div>
<div class="rt" style="left:31px;top:438px">Ч-890</div>
<div class="rt" style="left:241px;top:438px">Чайник</div>
<div class="hl" style="left:28px;top:452px;width:989px"></div>
<div class="vl" style="left:224px;top:452px;height:15px"></div>
<div class="vl" style="left:637px;top:452px;height:15px"></div>
<div class="vl" style="left:680px;top:452px;height:15px"></div>
<div class="vl" style="left:764px;top:452px;height:15px"></div>
<div class="vl" style="left:848px;top:452px;height:15px"></div>
<div class="vl" style="left:932px;top:452px;height:15px"></div>
<div class="vl" style="left:1016px;top:452px;height:15px"></div>
<div class="rt" style="left:31px;top:453px">Ч-8889</div>
<div class="rt" style="left:241px;top:453px">Чайник</div>
<div class="gr" style="left:28px;top:467px;width:988px;height:15px"></div>
<div class="hl" style="left:28px;top:467px;width:989px"></div>
<div class="vl" style="left:224px;top:467px;height:15px"></div>
<div class="vl" style="left:1016px;top:467px;height:15px"></div>
<div class="rt" style="left:31px;top:468px">Внуковская таможня</div>
<div class="hl" style="left:28px;top:482px;width:989px"></div>
<div class="vl" style="left:224px;top:482px;height:15px"></div>
<div class="vl" style="left:637px;top:482px;height:15px"></div>
<div class="vl" style="left:680px;top:482px;height:15px"></div>
<div class="vl" style="left:764px;top:482px;height:15px"></div>
<div class="vl" style="left:848px;top:482px;height:15px"></div>
<div class="vl" style="left:932px;top:482px;height:15px"></div>
<div class="vl" style="left:1016px;top:482px;height:15px"></div>
<div class="rt" style="left:31px;top:483px">M-77</div>
<div class="rt" style="left:241px;top:483px">Комбайн</div>
<div class="hl" style="left:28px;top:497px;width:989px"></div>
<div class="vl" style="left:224px;top:497px;height:15px"></div>
<div class="vl" style="left:637px;top:497px;height:15px"></div>
<div class="vl" style="left:680px;top:497px;height:15px"></div>
<div class="vl" style="left:764px;top:497px;height:15px"></div>
<div class="vl" style="left:848px;top:497px;height:15px"></div>
<div class="vl" style="left:932px;top:497px;height:15px"></div>
<div class="vl" style="left:1016px;top:497px;height:15px"></div>
<div class="rt" style="left:31px;top:498px">K-980</div>
<div class="rt" style="left:241px;top:498px">Кондиционер</div>
<div class="gr" style="left:28px;top:512px;width:988px;height:15px"></div>
<div class="hl" style="left:28px;top:512px;width:989px"></div>
<div class="vl" style="left:224px;top:512px;height:15px"></div>
<div class="vl" style="left:1016px;top:512px;height:15px"></div>
<div class="rt" style="left:31px;top:513px">Ларек "Розница"</div>
<div class="hl" style="left:28px;top:527px;width:989px"></div>
<div class="vl" style="left:224px;top:527px;height:15px"></div>
<div class="vl" style="left:637px;top:527px;height:15px"></div>
<div class="vl" style="left:680px;top:527px;height:15px"></div>
<div class="vl" style="left:764px;top:527px;height:15px"></div>
<div class="vl" style="left:848px;top:527px;height:15px"></div>
<div class="vl" style="left:932px;top:527px;height:15px"></div>
<div class="vl" style="left:1016px;top:527px;height:15px"></div>
<div class="rt" style="left:31px;top:528px">Арт-33344555</div>
<div class="rt" style="left:241px;top:528px">Ассорти</div>
<div class="hl" style="left:28px;top:542px;width:989px"></div>
<div class="vl" style="left:224px;top:542px;height:15px"></div>
<div class="vl" style="left:637px;top:542px;height:15px"></div>
<div class="vl" style="left:680px;top:542px;height:15px"></div>
<div class="vl" style="left:764px;top:542px;height:15px"></div>
<div class="vl" style="left:848px;top:542px;height:15px"></div>
<div class="vl" style="left:932px;top:542px;height:15px"></div>
<div class="vl" style="left:1016px;top:542px;height:15px"></div>
<div class="rt" style="left:31px;top:543px">Арт-7777</div>
<div class="rt" style="left:241px;top:543px">Барбарис (конфеты), ,</div>
<div class="rt" style="left:640px;top:543px">кг</div>
<div class="rt" style="left:749.5px;width:97px;text-align:right;top:543px">20,000</div>
<div class="rt" style="left:833.5px;width:97px;text-align:right;top:543px">5,000</div>
<div class="rt" style="left:917.5px;width:97px;text-align:right;top:543px">15,000</div>
<div class="hl" style="left:28px;top:557px;width:989px"></div>
<div class="vl" style="left:224px;top:557px;height:15px"></div>
<div class="vl" style="left:637px;top:557px;height:15px"></div>
<div class="vl" style="left:680px;top:557px;height:15px"></div>
<div class="vl" style="left:764px;top:557px;height:15px"></div>
<div class="vl" style="left:848px;top:557px;height:15px"></div>
<div class="vl" style="left:932px;top:557px;height:15px"></div>
<div class="vl" style="left:1016px;top:557px;height:15px"></div>
<div class="rt" style="left:31px;top:558px">Арт-6666888</div>
<div class="rt" style="left:241px;top:558px">Белочка (конфеты), ,</div>
<div class="rt" style="left:640px;top:558px">кг</div>
<div class="rt" style="left:749.5px;width:97px;text-align:right;top:558px">20,000</div>
<div class="rt" style="left:833.5px;width:97px;text-align:right;top:558px">5,000</div>
<div class="rt" style="left:917.5px;width:97px;text-align:right;top:558px">15,000</div>
<div class="hl" style="left:28px;top:572px;width:989px"></div>
<div class="vl" style="left:224px;top:572px;height:15px"></div>
<div class="vl" style="left:637px;top:572px;height:15px"></div>
<div class="vl" style="left:680px;top:572px;height:15px"></div>
<div class="vl" style="left:764px;top:572px;height:15px"></div>
<div class="vl" style="left:848px;top:572px;height:15px"></div>
<div class="vl" style="left:932px;top:572px;height:15px"></div>
<div class="vl" style="left:1016px;top:572px;height:15px"></div>
<div class="rt" style="left:31px;top:573px">Арт-999999</div>
<div class="rt" style="left:241px;top:573px">Грильяж (конфеты), ,</div>
<div class="rt" style="left:640px;top:573px">кг</div>
<div class="rt" style="left:749.5px;width:97px;text-align:right;top:573px">20,000</div>
<div class="rt" style="left:833.5px;width:97px;text-align:right;top:573px">6,000</div>
<div class="rt" style="left:917.5px;width:97px;text-align:right;top:573px">14,000</div>
<div class="hl" style="left:28px;top:587px;width:989px"></div>
<div class="vl" style="left:224px;top:587px;height:15px"></div>
<div class="vl" style="left:637px;top:587px;height:15px"></div>
<div class="vl" style="left:680px;top:587px;height:15px"></div>
<div class="vl" style="left:764px;top:587px;height:15px"></div>
<div class="vl" style="left:848px;top:587px;height:15px"></div>
<div class="vl" style="left:932px;top:587px;height:15px"></div>
<div class="vl" style="left:1016px;top:587px;height:15px"></div>
<div class="rt" style="left:31px;top:588px">Арт-56789</div>
<div class="rt" style="left:241px;top:588px">Крупа "Геркулес", ,</div>
<div class="rt" style="left:640px;top:588px">кг</div>
<div class="rt" style="left:749.5px;width:97px;text-align:right;top:588px">20,000</div>
<div class="rt" style="left:833.5px;width:97px;text-align:right;top:588px">10,000</div>
<div class="rt" style="left:917.5px;width:97px;text-align:right;top:588px">10,000</div>
<div class="hl" style="left:28px;top:602px;width:989px"></div>
<div class="vl" style="left:224px;top:602px;height:15px"></div>
<div class="vl" style="left:637px;top:602px;height:15px"></div>
<div class="vl" style="left:680px;top:602px;height:15px"></div>
<div class="vl" style="left:764px;top:602px;height:15px"></div>
<div class="vl" style="left:848px;top:602px;height:15px"></div>
<div class="vl" style="left:932px;top:602px;height:15px"></div>
<div class="vl" style="left:1016px;top:602px;height:15px"></div>
<div class="rt" style="left:31px;top:603px">Арт-89000</div>
<div class="rt" style="left:241px;top:603px">Крупа гречневая (весовая), ,</div>
<div class="rt" style="left:640px;top:603px">кг</div>
<div class="rt" style="left:749.5px;width:97px;text-align:right;top:603px">30,000</div>
<div class="rt" style="left:833.5px;width:97px;text-align:right;top:603px">15,000</div>
<div class="rt" style="left:917.5px;width:97px;text-align:right;top:603px">15,000</div>
<div class="hl" style="left:28px;top:617px;width:989px"></div>
<div class="vl" style="left:224px;top:617px;height:15px"></div>
<div class="vl" style="left:637px;top:617px;height:15px"></div>
<div class="vl" style="left:680px;top:617px;height:15px"></div>
<div class="vl" style="left:764px;top:617px;height:15px"></div>
<div class="vl" style="left:848px;top:617px;height:15px"></div>
<div class="vl" style="left:932px;top:617px;height:15px"></div>
<div class="vl" style="left:1016px;top:617px;height:15px"></div>
<div class="rt" style="left:31px;top:618px">Арт-89000</div>
<div class="rt" style="left:241px;top:618px">Крупа гречневая (упак), ,</div>
<div class="rt" style="left:640px;top:618px">упак</div>
<div class="rt" style="left:749.5px;width:97px;text-align:right;top:618px">20,000</div>
<div class="rt" style="left:833.5px;width:97px;text-align:right;top:618px">10,000</div>
<div class="rt" style="left:917.5px;width:97px;text-align:right;top:618px">10,000</div>
<div class="hl" style="left:28px;top:632px;width:989px"></div>
<div class="vl" style="left:224px;top:632px;height:15px"></div>
<div class="vl" style="left:637px;top:632px;height:15px"></div>
<div class="vl" style="left:680px;top:632px;height:15px"></div>
<div class="vl" style="left:764px;top:632px;height:15px"></div>
<div class="vl" style="left:848px;top:632px;height:15px"></div>
<div class="vl" style="left:932px;top:632px;height:15px"></div>
<div class="vl" style="left:1016px;top:632px;height:15px"></div>
<div class="rt" style="left:31px;top:633px">Арт-7890000</div>
<div class="rt" style="left:241px;top:633px">Масло "Кремлевское", ,</div>
<div class="rt" style="left:640px;top:633px">шт</div>
<div class="rt" style="left:749.5px;width:97px;text-align:right;top:633px">20,000</div>
<div class="rt" style="left:833.5px;width:97px;text-align:right;top:633px">10,000</div>
<div class="rt" style="left:917.5px;width:97px;text-align:right;top:633px">10,000</div>
<div class="mb" style="left:3px;top:140px"></div>
<div class="tl" style="left:8px;top:151px;width:1px;height:316px"></div>
<div class="tl" style="left:8px;top:467px;width:20px;height:1px"></div>
<div class="mb" style="left:3px;top:470px"></div>
<div class="tl" style="left:8px;top:481px;width:1px;height:31px"></div>
<div class="tl" style="left:8px;top:512px;width:20px;height:1px"></div>
<div class="mb" style="left:3px;top:515px"></div>
<div class="tl" style="left:8px;top:526px;width:1px;height:180px"></div>
<div class="tl" style="left:8px;top:706px;width:20px;height:1px"></div>
<div class="vl" style="left:28px;top:0;height:700px;background:#A6A6A6"></div>
<svg class="a" style="left:1664px;top:9px" width="9" height="6" viewBox="0 0 9 6"><path d="M0.5 5.5H8.5L4.5 0.5Z" fill="#BBBBBB"/></svg>
<div class="a" style="left:1665px;top:23px;width:8px;height:700px;border-radius:4px;background:#D2D2D2"></div>
<div class="a" style="left:1665px;top:23px;width:8px;height:80px;border-radius:4px;background:#9A9A9A"></div>
</div>
<!-- DIALOG -->
<div class="a" style="left:502px;top:298px;width:913px;height:442px;background:#fff;border:1px solid #9E9E9E;box-shadow:1px 2px 6px rgba(0,0,0,.10)"></div>
<div class="dt" style="left:514px;top:308px;letter-spacing:0.08px;font-size:18.7px;line-height:22px;color:#111">Настройки отчета "Ведомость по товарам на складах"</div>
<svg class="a" style="left:1330px;top:313px" width="5" height="13" viewBox="0 0 5 13"><circle cx="2.5" cy="2.5" r="1.3" fill="#777"/><circle cx="2.5" cy="6.5" r="1.3" fill="#777"/><circle cx="2.5" cy="10.5" r="1.3" fill="#777"/></svg>
<div class="a" style="left:1359px;top:315px;width:9px;height:9px;border:1.5px solid #222"></div>
<svg class="a" style="left:1388px;top:313px" width="12" height="12" viewBox="0 0 12 12"><path d="M1 1L11 11M11 1L1 11" stroke="#222" stroke-width="1.2"/></svg>
<div class="a" style="left:515px;top:369px;width:880px;height:322px;border:1px solid #BDBDBD"></div>
<div class="tab" style="left:610px;width:154px"></div>
<div class="tab" style="left:764px;width:119px"></div>
<div class="tab" style="left:883px;width:102px"></div>
<div class="tab" style="left:515px;width:95px;height:28px;background:#fff"></div>
<svg class="a" style="left:526px;top:349px" width="14" height="14" viewBox="0 0 14 14"><path d="M0.6 0.8H13.4L8.2 6.8V13L5.8 11.6V6.8Z" stroke="#8F8F8F" stroke-width="1.1" fill="#F2F2F2"/><path d="M1 1H13L9.8 4.5H4.2Z" fill="#BEBEBE"/></svg>
<div class="dt" style="left:547px;top:348px">Фильтры</div>
<svg class="a" style="left:617px;top:347px" width="16" height="16" viewBox="0 0 16 16"><path d="M0.5 1.5H8.5M0.5 4.5H8.5M0.5 7.5H8.5M0.5 10.5H8.5M0.5 13.5H8.5" stroke="#4A79A6" stroke-width="1.4"/><path d="M12 1V15" stroke="#3B6E9E" stroke-width="1.2"/><path d="M9.8 3.5L12 0.5L14.2 3.5ZM9.8 12.5L12 15.5L14.2 12.5Z" fill="#3B6E9E"/><path d="M9 8H10M14 8H15" stroke="#4A79A6" stroke-width="1"/></svg>
<div class="dt" style="left:641px;top:348px">Поля и сортировки</div>
<svg class="a" style="left:772px;top:347px" width="17" height="16" viewBox="0 0 17 16"><path d="M16 0.5L7 9.5L9 11.5Z" fill="#7A5230"/><path d="M7 9.5Q3 10 3 13Q2 15 0.5 15.5Q5 16 8 13.5L9 11.5Z" fill="#2D4E8E"/></svg>
<div class="dt" style="left:795px;top:348px">Оформление</div>
<svg class="a" style="left:892px;top:347px" width="14" height="16" viewBox="0 0 14 16"><path d="M1 1H6M2.5 1V15M2.5 6H6M2.5 10.5H6M2.5 15H6" stroke="#3a4a5a" stroke-width="1.1" fill="none"/><path d="M7 5.5H13M7 10H13" stroke="#2F73B8" stroke-width="1.4"/><path d="M7 7.5H11M7 12H11" stroke="#2F73B8" stroke-width="1.1"/></svg>
<div class="dt" style="left:914px;top:348px">Структура</div>
<div class="btn" style="left:526px;top:378px;width:145px;height:26px"></div>
<svg class="a" style="left:533px;top:383px" width="16" height="16" viewBox="0 0 16 16"><circle cx="8" cy="8" r="7.2" fill="#2E9E55"/><path d="M8 3.5V12.5M3.5 8H12.5" stroke="#fff" stroke-width="2.6"/></svg>
<div class="dt" style="left:556px;top:384px;color:#444">Добавить фильтр</div>
<div class="btn" style="left:680px;top:378px;width:30px;height:26px"></div>
<svg class="a" style="left:687px;top:383px" width="16" height="16" viewBox="0 0 16 16"><circle cx="8" cy="8" r="7.2" fill="#D9262A"/><path d="M5 5L11 11M11 5L5 11" stroke="#fff" stroke-width="2.2"/></svg>
<div class="btn" style="left:730px;top:378px;width:60px;height:26px"></div>
<div class="a" style="left:760px;top:379px;width:1px;height:24px;background:#C8C8C8"></div>
<svg class="a" style="left:736px;top:383px" width="16" height="15" viewBox="0 0 16 15"><path d="M8 0.5L15.5 8H11V14H5V8H0.5Z" fill="#3D9BE9" stroke="#2A7BC4" stroke-width="0.8"/></svg>
<svg class="a" style="left:765px;top:382px" width="16" height="15" viewBox="0 0 16 15"><path d="M8 14.5L15.5 7H11V1H5V7H0.5Z" fill="#3D9BE9" stroke="#2A7BC4" stroke-width="0.8"/></svg>
<div class="btn" style="left:810px;top:378px;width:60px;height:26px"></div>
<div class="a" style="left:840px;top:379px;width:1px;height:24px;background:#C8C8C8"></div>
<svg class="a" style="left:816px;top:382px" width="17" height="17" viewBox="0 0 17 17"><path d="M5.5 1.5H15.5V11.5" stroke="#6F7F8F" stroke-width="1" fill="none"/><path d="M3.5 3.5H13.5V13.5" stroke="#6F7F8F" stroke-width="1" fill="#fff"/><path d="M1.5 5.5H11.5V15.5H1.5Z" stroke="#6F7F8F" stroke-width="1" fill="#E8F0F6"/><path d="M3.5 10L6 12.8L11.5 6.5" stroke="#2E9A45" stroke-width="2" fill="none"/></svg>
<svg class="a" style="left:846px;top:382px" width="17" height="17" viewBox="0 0 17 17"><path d="M5.5 1.5H15.5V11.5" stroke="#6F7F8F" stroke-width="1" fill="none"/><path d="M3.5 3.5H13.5V13.5" stroke="#6F7F8F" stroke-width="1" fill="none"/><path d="M1.5 5.5H11.5V15.5H1.5Z" stroke="#3B5A8A" stroke-width="1.1" fill="#fff"/></svg>
<div class="btn" style="left:890px;top:378px;width:103px;height:26px"></div>
<div class="dt" style="left:903px;top:384px;color:#333">Показывать</div>
<svg class="a" style="left:979px;top:390px" width="8" height="5" viewBox="0 0 8 5"><path d="M0 0H7L3.5 4Z" fill="#444"/></svg>
<div class="btn" style="left:1323px;top:378px;width:61px;height:26px"></div>
<div class="dt" style="left:1337px;top:384px">Еще</div>
<svg class="a" style="left:1369px;top:390px" width="8" height="5" viewBox="0 0 8 5"><path d="M0 0H7L3.5 4Z" fill="#444"/></svg>
<div class="a" style="left:526px;top:413px;width:858px;height:268px;border:1px solid #ABABAB"></div>
<div class="a" style="left:527px;top:414px;width:842px;height:30px;background:#F0F0F0;border-bottom:1px solid #CFCFCF"></div>
<div class="a" style="left:948px;top:414px;width:1px;height:29px;background:#D4D4D4"></div>
<div class="a" style="left:1078px;top:414px;width:1px;height:29px;background:#D4D4D4"></div>
<div class="a" style="left:1204px;top:414px;width:1px;height:29px;background:#D4D4D4"></div>
<div class="a" style="left:1241px;top:414px;width:1px;height:29px;background:#D4D4D4"></div>
<div class="dt" style="left:535px;top:421px">Поле</div>
<div class="dt" style="left:957px;top:421px">Условие</div>
<div class="dt" style="left:1085px;top:421px">Значение</div>
<svg class="a" style="left:1214px;top:421px" width="14" height="14" viewBox="0 0 14 14"><path d="M7 0.5L8.8 5H13.5L9.7 8L11.2 13L7 10L2.8 13L4.3 8L0.5 5H5.2Z" fill="#F8A948"/></svg>
<div class="dt" style="left:1250px;top:421px">Заголовок</div>
<svg class="a" style="left:1371px;top:421px" width="9" height="6" viewBox="0 0 9 6"><path d="M0.5 5.5H8.5L4.5 0.5Z" fill="#444"/></svg>
<div class="a" style="left:1372px;top:437px;width:8px;height:228px;border-radius:4px;background:#D6D6D6"></div>
<div class="a" style="left:1372px;top:461px;width:8px;height:195px;border-radius:4px;background:#9B9B9B"></div>
<svg class="a" style="left:1371px;top:666px" width="9" height="6" viewBox="0 0 9 6"><path d="M0.5 0.5H8.5L4.5 5.5Z" fill="#BBBBBB"/></svg>
<div class="a" style="left:527px;top:561px;width:842px;height:29px;background:#FDF0C6"></div>
<div class="a" style="left:596px;top:561px;width:46px;height:29px;background:#FCE9A3;border:2px solid #F2C400"></div>
<div class="cb" style="left:574px;top:452px"></div>
<div class="dt" style="left:600px;top:452px">Период</div>
<div class="dt" style="left:1085px;top:452px">Эта неделя</div>
<svg class="a" style="left:1214px;top:452px" width="14" height="14" viewBox="0 0 14 14"><path d="M7 0.5L8.8 5H13.5L9.7 8L11.2 13L7 10L2.8 13L4.3 8L0.5 5H5.2Z" fill="#F8A948"/></svg>
<div class="dt" style="left:1250px;top:452px;color:#BDBDBD">Период</div>
<div class="dt" style="left:575px;top:481px">Количество товаров</div>
<div class="dt" style="left:1089px;top:481px">В единицах хра...</div>
<div class="bd" style="left:1215px;top:484px"></div>
<div class="dt" style="left:1250px;top:481px;color:#BDBDBD">Количество тов...</div>
<div class="dt" style="left:575px;top:510px">Количественные итоги</div>
<div class="dt" style="left:1085px;top:510px">С учетом едини...</div>
<svg class="a" style="left:1214px;top:510px" width="13" height="13" viewBox="0 0 13 13"><path d="M1.5 1.5L11.5 11.5M11.5 1.5L1.5 11.5" stroke="#7D8790" stroke-width="2.4"/></svg>
<div class="dt" style="left:1250px;top:510px;color:#BDBDBD">Количественны...</div>
<svg class="a" style="left:537px;top:541px" width="10" height="10" viewBox="0 0 10 10"><circle cx="5" cy="5" r="4.3" stroke="#9a9a9a" stroke-width="1" fill="#fff"/><path d="M2.8 5H7.2" stroke="#777" stroke-width="1"/></svg>
<svg class="a" style="left:553px;top:537px" width="18" height="18" viewBox="0 0 18 18"><path d="M1.5 4.5H15.5V16.5H1.5Z" stroke="#7E8A95" stroke-width="1" fill="#fff"/><path d="M5 5V16M10 5V16" stroke="#7E8A95" stroke-width="1"/><path d="M3 7V15M7 7V15M12.5 7V15" stroke="#B5BDC5" stroke-width="1" stroke-dasharray="1 1"/><path d="M4 1H16.5L11.5 6.5V12H9V6.5Z" fill="#fff" stroke="#8E969E" stroke-width="1"/><path d="M4.5 1.5H16L13 4H7Z" fill="#9FA7AF"/></svg>
<div class="dt" style="left:580px;top:539px">Отборы</div>
<div class="cb" style="left:574px;top:568px"></div>
<div class="dt" style="left:600px;top:568px">Склад</div>
<div class="dt" style="left:957px;top:568px">Равно</div>
<svg class="a" style="left:1214px;top:568px" width="14" height="14" viewBox="0 0 14 14"><path d="M7 0.5L8.8 5H13.5L9.7 8L11.2 13L7 10L2.8 13L4.3 8L0.5 5H5.2Z" fill="#F8A948"/></svg>
<div class="dt" style="left:1250px;top:568px;color:#A8A8A8">Склад</div>
<div class="cb" style="left:574px;top:597px"></div>
<div class="dt" style="left:600px;top:597px">Сегмент номенклатуры</div>
<div class="dt" style="left:957px;top:597px">Равно</div>
<div class="bd" style="left:1215px;top:600px"></div>
<div class="dt" style="left:1250px;top:597px;color:#BDBDBD">Сегмент номенк...</div>
<div class="cb" style="left:574px;top:626px"></div>
<svg class="a" style="left:576px;top:624px" width="15" height="14" viewBox="0 0 15 14"><path d="M1.5 8L5 11.5L13 2" stroke="#1E8A44" stroke-width="2.4" fill="none"/></svg>
<div class="dt" style="left:600px;top:626px">Номенклатура</div>
<div class="dt" style="left:957px;top:626px">В группе из спи...</div>
<div class="bd" style="left:1215px;top:629px"></div>
<div class="dt" style="left:1250px;top:626px;color:#BDBDBD">Номенклатура</div>
<div class="cb" style="left:574px;top:655px"></div>
<div class="dt" style="left:600px;top:655px">Номенклатура.Артикул</div>
<div class="dt" style="left:957px;top:655px">Содержит</div>
<div class="bd" style="left:1215px;top:658px"></div>
<div class="dt" style="left:1250px;top:655px">Артикул</div>
<div class="dt" style="left:515px;top:706px;color:#444">Вид:</div>
<div class="a" style="left:548px;top:701px;width:177px;height:25px;border:1px solid #B5B5B5;border-radius:3px;background:#fff"></div>
<div class="a" style="left:549px;top:702px;width:68px;height:23px;border-right:1px solid #B5B5B5;border-radius:2px 0 0 2px;background:linear-gradient(#F6F6F6,#E6E6E6)"></div>
<div class="dt" style="left:558px;top:706px">Простой</div>
<div class="dt" style="left:628px;top:706px;color:#1E9A4C">Расширенный</div>
<div class="dt" style="left:731px;top:706px;color:#2F76C0">?</div>
<div class="a" style="left:1127px;top:700px;width:198px;height:26px;border:1px solid #B59C00;border-radius:3px;background:linear-gradient(#FFE838,#F6D000);box-shadow:0 1px 1px rgba(0,0,0,.2)"></div>
<div class="dt" style="left:1141px;top:706px;font-weight:bold;color:#333">Закрыть и сформировать</div>
<div class="btn" style="left:1334px;top:700px;width:61px;height:26px"></div>
<div class="dt" style="left:1347px;top:706px">Еще</div>
<svg class="a" style="left:1380px;top:712px" width="8" height="5" viewBox="0 0 8 5"><path d="M0 0H7L3.5 4Z" fill="#444"/></svg>
<!-- ANNOT -->
<div class="g" style="left:357px;top:149px;width:120px;height:41px"></div>
<div class="g" style="left:512px;top:334px;width:104px;height:39px"></div>
<div class="g" style="left:948px;top:410px;width:132px;height:35px"></div>
<div class="g" style="left:556px;top:614px;width:657px;height:40px"></div>
<svg class="a" style="left:0;top:0" width="1910" height="839" viewBox="0 0 1910 839"><g stroke="#00FF00" stroke-width="3.4" fill="none" stroke-linecap="round" stroke-linejoin="round"><path d="M472 188L524 289"/><path d="M514 285L524 289L527 278"/><path d="M1017.6 446L1020 610"/><path d="M1012 602L1020 610L1027 602"/></g></svg>
</body></html>
